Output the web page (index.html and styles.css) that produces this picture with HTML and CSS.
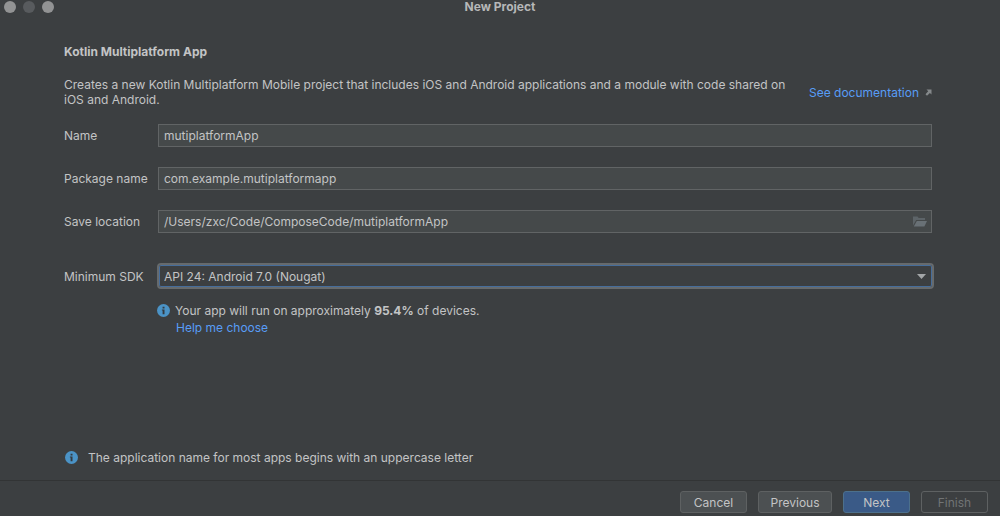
FILE: index.html
```html
<!DOCTYPE html>
<html lang="en">
<head>
<meta charset="utf-8">
<title>New Project</title>
<link rel="stylesheet" href="styles.css">
</head>
<body>
<div class="window">
  <header class="titlebar">
    <div class="lights"><span class="light"></span><span class="light light-dim"></span><span class="light"></span></div>
    <h1 class="title">New Project</h1>
  </header>
  <main class="content">
    <h2 class="heading">Kotlin Multiplatform App</h2>
    <div class="intro">
      <p class="description">Creates a new Kotlin Multiplatform Mobile project that includes iOS and Android applications and a module with code shared on iOS and Android.</p>
      <a class="link doc-link" href="#">See documentation
        <svg class="arrow" viewBox="0 0 7 7" aria-hidden="true"><path d="M1.5 .5H6.5V5.5L4.9 3.9L2 6.8L.5 5.3L3.2 2.3z" fill="#85898b"/></svg>
      </a>
    </div>
    <form class="form" id="project">
      <label for="name">Name</label>
      <input class="field" id="name" type="text" value="mutiplatformApp">
      <label for="package">Package name</label>
      <input class="field" id="package" type="text" value="com.example.mutiplatformapp">
      <label for="location">Save location</label>
      <div class="field-wrap">
        <input class="field" id="location" type="text" value="/Users/zxc/Code/ComposeCode/mutiplatformApp">
        <button class="browse" type="button" aria-label="Browse">
          <svg viewBox="0 0 14 11" width="14" height="11" aria-hidden="true"><path d="M0 .5h4.5l1.2 1.5H12v2H3.2L0 9.5z" fill="#5d6468"/><path d="M3.8 5H14l-2.6 5.5H.8z" fill="#697176"/></svg>
        </button>
      </div>
      <label class="sdk-label" for="sdk">Minimum SDK</label>
      <div class="select-wrap">
        <select class="select" id="sdk"><option>API 24: Android 7.0 (Nougat)</option></select>
        <svg class="caret" viewBox="0 0 9 5" aria-hidden="true"><path d="M0 0h9L4.5 5z" fill="#a3a6a8"/></svg>
      </div>
    </form>
    <div class="sdk-info">
      <svg class="info" viewBox="0 0 13 13" aria-hidden="true"><circle cx="6.5" cy="6.5" r="6.5" fill="#4b93c6"/><path d="M5.6 2.8h1.9v1.6H5.6zM4.9 5.5h2.6v4.7H5.6V6.6H4.9z" fill="#343a3f"/></svg>
      <p>Your app will run on approximately <b>95.4%</b> of devices.</p>
      <a class="link help" href="#">Help me choose</a>
    </div>
    <div class="notice">
      <svg class="info" viewBox="0 0 13 13" aria-hidden="true"><circle cx="6.5" cy="6.5" r="6.5" fill="#4b93c6"/><path d="M5.6 2.8h1.9v1.6H5.6zM4.9 5.5h2.6v4.7H5.6V6.6H4.9z" fill="#343a3f"/></svg>
      <p>The application name for most apps begins with an uppercase letter</p>
    </div>
  </main>
  <footer class="footer">
    <button class="button" type="button">Cancel</button>
    <button class="button button-wide" type="button">Previous</button>
    <button class="button button-primary" type="submit" form="project">Next</button>
    <button class="button" type="button" disabled>Finish</button>
  </footer>
</div>
</body>
</html>
```
FILE: styles.css
```css
* { box-sizing: border-box; }
body, h1, h2, p { margin: 0; }
body {
  background: #3c3f41;
  color: #c3c4c5;
  font: 12px/15px Inter, "Liberation Sans", sans-serif;
}
input, select, button { font: inherit; color: inherit; }
.window { display: flex; flex-direction: column; min-height: 100vh; }
.titlebar {
  display: grid;
  grid-template-columns: 1fr auto 1fr;
  align-items: center;
  height: 14px;
  padding: 0 4px;
}
.lights { display: flex; gap: 7px; }
.light { width: 12px; height: 12px; border-radius: 50%; background: #929394; }
.light-dim { background: #585b5e; }
.title { font-size: 12px; line-height: 14px; font-weight: 700; color: #b6b7b8; }
.content {
  flex: 1;
  display: flex;
  flex-direction: column;
  padding: 30px 68px 15px 64px;
}
.heading { font-size: 12px; line-height: 15px; font-weight: 700; }
.intro {
  display: flex;
  justify-content: space-between;
  align-items: center;
  gap: 16px;
  margin-top: 18px;
}
.description { flex: 1; }
.link { color: #589df6; text-decoration: none; }
.doc-link { display: flex; align-items: center; gap: 6px; white-space: nowrap; }
.arrow { width: 7px; height: 7px; }
.form {
  display: grid;
  grid-template-columns: 94px 1fr;
  row-gap: 20px;
  align-items: center;
  margin-top: 17px;
}
.field {
  display: block;
  width: 100%;
  height: 23px;
  padding: 0 5px;
  border: 1px solid #616465;
  border-radius: 0;
  background: #45494a;
  outline: none;
}
.field-wrap, .select-wrap { position: relative; }
.browse {
  position: absolute;
  top: 0;
  right: 0;
  display: flex;
  align-items: center;
  height: 100%;
  padding: 0 5px;
  border: 0;
  background: none;
}
.sdk-label { margin-top: 10px; }
.select-wrap { margin: 10px -2px 0 -1px; }
.select {
  display: block;
  appearance: none;
  width: 100%;
  height: 26px;
  padding: 0 5px;
  border: 2px solid #666a6c;
  border-radius: 4px;
  box-shadow: inset 0 0 0 1px #466d9b;
  background: #3c3f41;
  outline: none;
}
.caret {
  position: absolute;
  top: 11px;
  right: 8px;
  width: 9px;
  height: 5px;
  pointer-events: none;
}
.info { width: 13px; height: 13px; }
.sdk-info {
  display: grid;
  grid-template-columns: 13px 1fr;
  align-items: center;
  gap: 2px 5px;
  margin: 14px 0 0 93px;
}
.help { grid-column: 2; justify-self: start; margin-left: 1px; }
.notice { display: flex; align-items: center; gap: 10px; margin-top: auto; padding-left: 1px; }
.footer {
  display: flex;
  justify-content: flex-end;
  gap: 11px;
  padding: 10px 12px 3px;
  border-top: 1px solid #323435;
}
.button {
  min-width: 67px;
  height: 22px;
  padding: 0 10px;
  border: 1px solid #5e6162;
  border-radius: 3px;
  background: #4c5052;
}
.button-wide { min-width: 74px; }
.button-primary { background: #3a5a87; border-color: #4c708c; }
.button:disabled { background: none; color: #717475; }
```
